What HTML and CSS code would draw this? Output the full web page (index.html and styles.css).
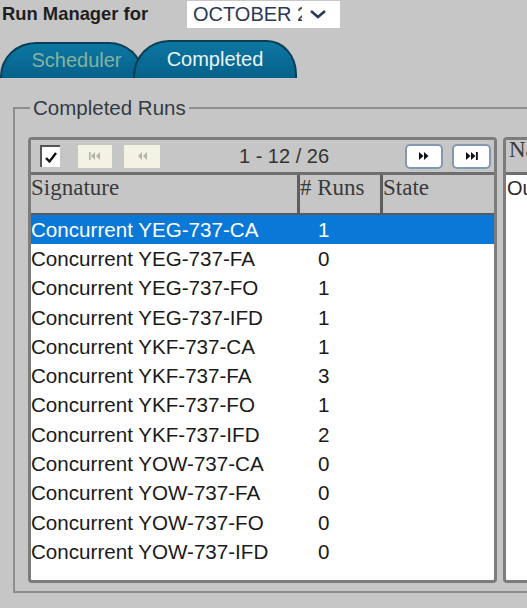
FILE: index.html
```html
<!DOCTYPE html>
<html>
<head>
<meta charset="utf-8">
<title>Run Manager</title>
<link rel="stylesheet" href="styles.css">
</head>
<body>
<div class="topbar">
  <span class="title">Run Manager for</span>
  <div class="select">
    <span class="select-text">OCTOBER 2019</span>
    <svg class="chev" width="20" height="12" viewBox="0 0 20 12"><polyline points="3,3 10,9 17,3" fill="none" stroke="#2b3856" stroke-width="2.6"/></svg>
  </div>
</div>

<div class="tabs">
  <div class="tab tab-sched">Scheduler</div>
  <div class="tab tab-comp">Completed</div>
</div>

<fieldset class="group">
  <legend>Completed Runs</legend>
  <div class="panes">
    <div class="grid-panel">
      <div class="toolbar">
        <span class="check"><svg width="16" height="16" viewBox="0 0 16 16"><path d="M3 9 L6.5 12.5 L13 4" fill="none" stroke="#111" stroke-width="2.4"/></svg></span>
        <span class="pbtn disabled b1"><svg width="12" height="8" viewBox="0 0 12 8"><rect x="0" y="0" width="1.6" height="8" fill="#b4b4a8"/><polygon points="6,0 6,8 2,4" fill="#b4b4a8"/><polygon points="11,0 11,8 7,4" fill="#b4b4a8"/></svg></span>
        <span class="pbtn disabled b2"><svg width="10" height="8" viewBox="0 0 10 8"><polygon points="5,0 5,8 1,4" fill="#b4b4a8"/><polygon points="10,0 10,8 6,4" fill="#b4b4a8"/></svg></span>
        <span class="pager">1 - 12 / 26</span>
        <span class="pbtn enabled b3"><svg width="10" height="8" viewBox="0 0 10 8"><polygon points="0,0 0,8 4.5,4" fill="#111"/><polygon points="5,0 5,8 9.5,4" fill="#111"/></svg></span>
        <span class="pbtn enabled b4"><svg width="12" height="8" viewBox="0 0 12 8"><polygon points="0,0 0,8 4.5,4" fill="#111"/><polygon points="5,0 5,8 9.5,4" fill="#111"/><rect x="10" y="0" width="1.8" height="8" fill="#111"/></svg></span>
      </div>
      <div class="thead">
        <div class="th">Signature</div>
        <div class="th"># Runs</div>
        <div class="th last">State</div>
      </div>
      <div class="tbody">
        <div class="tr selected"><span class="td sig">Concurrent YEG-737-CA</span><span class="td num">1</span><span class="td"></span></div>
        <div class="tr"><span class="td sig">Concurrent YEG-737-FA</span><span class="td num">0</span><span class="td"></span></div>
        <div class="tr"><span class="td sig">Concurrent YEG-737-FO</span><span class="td num">1</span><span class="td"></span></div>
        <div class="tr"><span class="td sig">Concurrent YEG-737-IFD</span><span class="td num">1</span><span class="td"></span></div>
        <div class="tr"><span class="td sig">Concurrent YKF-737-CA</span><span class="td num">1</span><span class="td"></span></div>
        <div class="tr"><span class="td sig">Concurrent YKF-737-FA</span><span class="td num">3</span><span class="td"></span></div>
        <div class="tr"><span class="td sig">Concurrent YKF-737-FO</span><span class="td num">1</span><span class="td"></span></div>
        <div class="tr"><span class="td sig">Concurrent YKF-737-IFD</span><span class="td num">2</span><span class="td"></span></div>
        <div class="tr"><span class="td sig">Concurrent YOW-737-CA</span><span class="td num">0</span><span class="td"></span></div>
        <div class="tr"><span class="td sig">Concurrent YOW-737-FA</span><span class="td num">0</span><span class="td"></span></div>
        <div class="tr"><span class="td sig">Concurrent YOW-737-FO</span><span class="td num">0</span><span class="td"></span></div>
        <div class="tr"><span class="td sig">Concurrent YOW-737-IFD</span><span class="td num">0</span><span class="td"></span></div>
      </div>
    </div>
    <div class="side-panel">
      <div class="side-head">Name</div>
      <div class="side-body">Output</div>
    </div>
  </div>
</fieldset>
</body>
</html>
```

FILE: styles.css
```css
html, body {
  margin: 0;
  width: 527px;
  height: 608px;
  overflow: hidden;
  background: #c6c6c6;
  font-family: "Liberation Sans", Arial, sans-serif;
  color: #1c1c1c;
}

.topbar {
  display: flex;
  align-items: center;
  height: 28px;
}

.title {
  font-weight: bold;
  font-size: 18.4px;
  margin-left: 2px;
  width: 185px;
  color: #1e1e1e;
}

.select {
  width: 153px;
  height: 27px;
  background: #fff;
  display: flex;
  align-items: center;
  box-sizing: border-box;
  padding-left: 6px;
  font-size: 20px;
  color: #2b3856;
}

.select-text {
  width: 109px;
  overflow: hidden;
  white-space: nowrap;
}

.chev {
  margin-left: 6px;
}

.tabs {
  display: flex;
  align-items: flex-end;
  height: 38px;
  margin-top: 12px;
}

.tab {
  box-sizing: border-box;
  font-size: 20px;
  text-align: center;
  padding-top: 6px;
  background: linear-gradient(#0c77a2, #06618a);
  border: 2px solid #0b3d55;
  border-bottom: none;
}

.tab-sched {
  width: 143px;
  height: 36px;
  color: #86b3a0;
  border-radius: 36px 34px 0 0 / 34px 32px 0 0;
  padding-left: 10px;
  padding-top: 5px;
}

.tab-comp {
  width: 164px;
  height: 38px;
  margin-left: -10px;
  color: #eaf4f8;
  border-radius: 36px 30px 0 0 / 36px 34px 0 0;
  position: relative;
  z-index: 1;
}

.group {
  margin: 19px 0 0 13px;
  padding: 0 0 8px 0;
  width: 600px;
  border: 2px solid #8e8e8e;
  border-right: none;
  min-inline-size: 0;
}

.group legend {
  font-size: 20.5px;
  line-height: 22px;
  margin-left: 15px;
  padding: 0 3px;
  color: #333a44;
}

.panes {
  display: flex;
  gap: 6px;
  margin: 18px 0 0 13px;
}

.grid-panel {
  width: 469px;
  height: 446px;
  box-sizing: border-box;
  border: 3px solid #7c7c7c;
  border-radius: 4px;
  background: #fff;
  display: flex;
  flex-direction: column;
  overflow: hidden;
}

.toolbar {
  height: 32px;
  background: #c6c6c6;
  display: flex;
  align-items: center;
  flex-shrink: 0;
}

.check {
  width: 20px;
  height: 22px;
  box-sizing: border-box;
  margin-left: 9px;
  background: #fff;
  border-top: 2px solid #555;
  border-left: 2px solid #555;
  display: flex;
  align-items: center;
  justify-content: center;
}

.pbtn {
  box-sizing: border-box;
  display: flex;
  align-items: center;
  justify-content: center;
}

.disabled {
  height: 23px;
  background: #f3f2e3;
}

.b1 { width: 34px; margin-left: 18px; }
.b2 { width: 36px; margin-left: 12px; }

.pager {
  flex: 1;
  text-align: center;
  font-size: 20px;
  color: #333;
  padding-left: 3px;
}

.enabled {
  height: 25px;
  background: #fff;
  border: 2px solid #8598b2;
  border-radius: 5px;
}

.b3 { width: 38px; }
.b4 { width: 39px; margin-left: 9px; margin-right: 3px; }

.thead {
  display: grid;
  grid-template-columns: 269px 83px 1fr;
  height: 43px;
  flex-shrink: 0;
  background: #c6c6c6;
  border-top: 3px solid #6e6e6e;
  border-bottom: 2px solid #5a5a5a;
  box-sizing: border-box;
}

.th {
  font-family: "Liberation Serif", "Times New Roman", serif;
  font-size: 23px;
  line-height: 26px;
  color: #3a3a3a;
  border-right: 3px solid #5e5e5e;
  white-space: nowrap;
  overflow: hidden;
}

.th.last {
  border-right: none;
}

.tr {
  display: grid;
  grid-template-columns: 269px 83px 1fr;
  height: 29.3px;
  align-items: center;
  font-size: 20.6px;
  color: #1a1a1a;
}

.tr.selected {
  background: #0a78d6;
  color: #fff;
}

.td.num {
  padding-left: 18px;
}

.side-panel {
  width: 60px;
  height: 446px;
  box-sizing: border-box;
  border: 3px solid #7c7c7c;
  border-right: none;
  border-radius: 4px 0 0 4px;
  background: #fff;
  overflow: hidden;
}

.side-head {
  height: 32px;
  background: #c6c6c6;
  border-bottom: 3px solid #6e6e6e;
  font-family: "Liberation Serif", "Times New Roman", serif;
  font-size: 23px;
  line-height: 20px;
  padding-left: 3px;
  color: #3a3a3a;
  white-space: nowrap;
}

.side-body {
  font-size: 20px;
  padding: 2px 0 0 1px;
  color: #2a2a2a;
  white-space: nowrap;
}
```
